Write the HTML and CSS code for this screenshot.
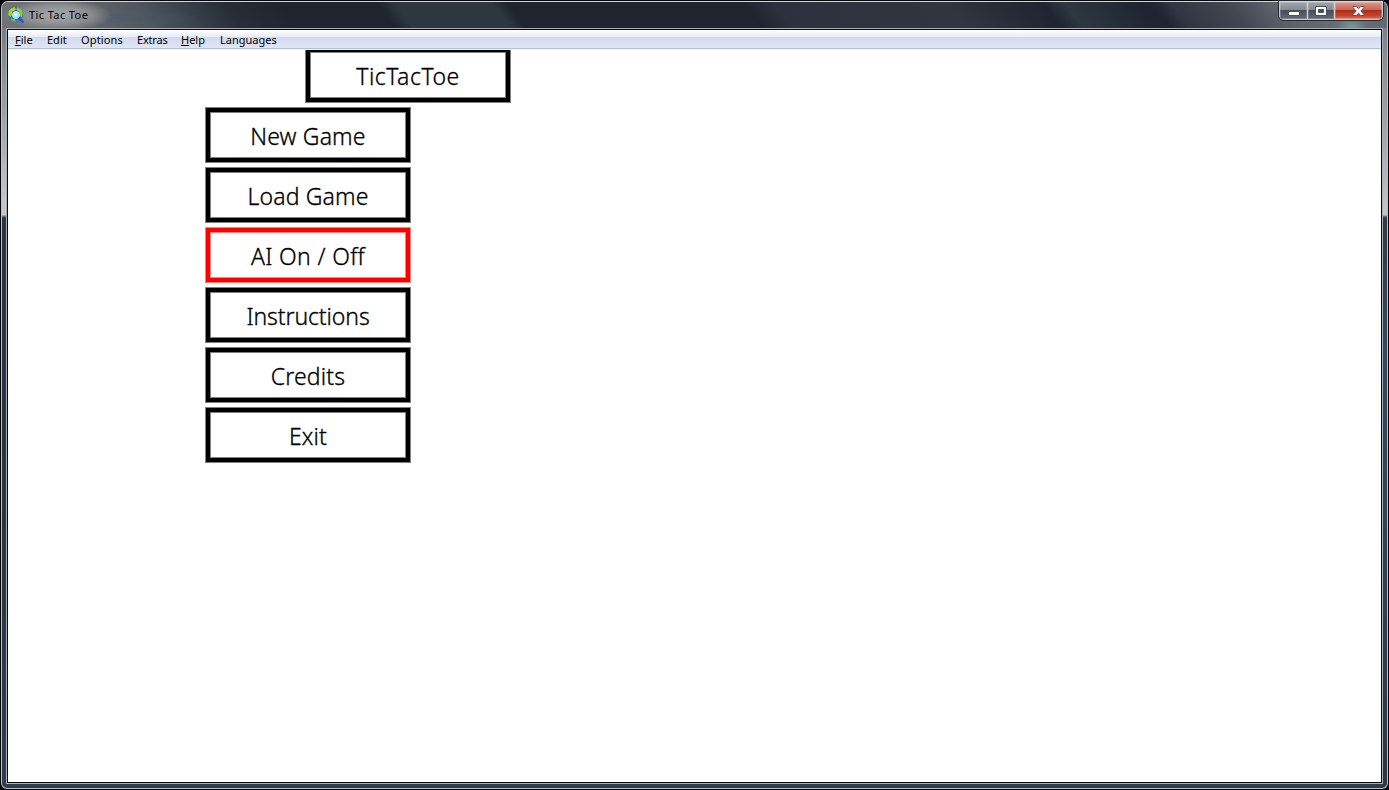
FILE: index.html
```html
<!DOCTYPE html>
<html lang="en">
<head>
<meta charset="utf-8">
<title>Tic Tac Toe</title>
<link rel="stylesheet" href="styles.css">
</head>
<body>
<div class="window">
  <div class="frame">
    <header class="titlebar">
      <svg class="app-icon" width="16" height="16" viewBox="0 0 16 16">
        <circle cx="7.5" cy="7.5" r="7.5" fill="#2f76cf"/>
        <path d="M.6 4.500Q3 .5 6.500.2L8 2 6 4 4 4.500 4 7.500 2.500 10 .3 8z" fill="#a8d520"/>
        <path d="M9 .3q4.500 1 5.800 5.200l-.6 4.500-2.200-1L11 5 8.500 3z" fill="#8cc832"/>
        <path d="M3.500 11.500l3.500.5 1 2.700Q5 15 2.600 13z" fill="#72bb40"/>
        <path d="M11 11l3.700 3.700" stroke="#1e63bb" stroke-width="2.600" stroke-linecap="round"/>
        <circle cx="8" cy="8" r="3.500" fill="#a8e5ee" stroke="#c9dde0" stroke-width="1"/>
        <circle cx="7.500" cy="7.200" r="1.600" fill="#d7f8f5"/>
      </svg>
      <h1 class="caption">Tic Tac Toe</h1>
      <div class="controls">
        <span class="control minimize"><svg width="13" height="6" viewBox="0 0 13 6"><rect x=".5" y=".5" width="11" height="4" rx=".5" fill="#fff" stroke="#4b505d"/></svg></span>
        <span class="control maximize"><svg width="12" height="10" viewBox="0 0 12 10"><path fill-rule="evenodd" d="M.5.5h11v9H.5zM3.500 3.500v3h5v-3z" fill="#fff" stroke="#4b505d"/></svg></span>
        <span class="control close"><svg width="13" height="10" viewBox="0 0 13 10"><path d="M1 .5h3.200l2.300 2.200L8.800.5H12v1L8.800 5 12 8.500v1H8.800L6.500 7.300 4.200 9.500H1v-1L4.200 5 1 1.500z" fill="#fff" stroke="#56505e"/></svg></span>
      </div>
    </header>
    <div class="client">
      <nav class="menubar">
        <span class="m-file"><u>F</u>ile</span><span class="m-edit">Edit</span><span class="m-options">Options</span><span class="m-extras">Extras</span><span class="m-help"><u>H</u>elp</span><span class="m-languages">Languages</span>
      </nav>
      <main class="board">
        <div class="box heading">TicTacToe</div>
        <div class="box">New Game</div>
        <div class="box">Load Game</div>
        <div class="box selected">AI On / Off</div>
        <div class="box instructions">Instructions</div>
        <div class="box">Credits</div>
        <div class="box">Exit</div>
      </main>
    </div>
  </div>
</div>
</body>
</html>
```
FILE: styles.css
```css
* { box-sizing: border-box; }
body { margin: 0; background: #05070a; font-family: "Noto Sans", sans-serif; color: #000; }
.window { height: 790px; padding: 1px; overflow: hidden; }
.frame {
  height: 788px;
  border: 1px solid #b9bfc5;
  border-top-color: #d5d5dd;
  border-radius: 7px 7px 6px 6px;
  padding: 0 4px 4px;
  display: flex;
  flex-direction: column;
  background:
    linear-gradient(#6d7075 0, #8c8d90 60px, #c2c0c2 190px, #c9c7c8 213px, #777b80 214px, #2d3540 216px, #2b3542 500px, #303e4c 100%) left / 5px 100% no-repeat,
    linear-gradient(#70757c 0, #8a8f96 60px, #b9bcc1 190px, #c5c8cb 213px, #777b80 214px, #303a47 216px, #34495d 350px, #2b3745 100%) right / 5px 100% no-repeat,
    #2e3b48;
}
.titlebar {
  height: 26px;
  margin: 0 -4px;
  padding-left: 6px;
  display: flex;
  align-items: flex-start;
  border-radius: 6px 6px 0 0;
  background:
    radial-gradient(ellipse 54px 16px at 56px 13px, rgba(180,181,182,.85), rgba(155,157,159,.7) 60%, transparent),
    radial-gradient(ellipse 18px 7px at 117px 16px, rgba(62,91,117,.5), transparent),
    radial-gradient(ellipse 42px 7px at 157px 16px, rgba(69,85,103,.5), transparent),
    radial-gradient(ellipse 15px 8px at 1350px 24px, rgba(116,163,155,.8), transparent),
    linear-gradient(52deg, #717477 0, #65696e 5.8%, #50565e 10.8%, #3b434d 13.7%, #272e38 17%, #1e252f 21%, #1e252f 28.1%, #2e3640 29.3%, #2e3640 36.2%, #1e252f 37.3%, #1e252f 54.2%, #2b323d 56.4%, #30363f 68.5%, #1e2530 75.4%, #2e3640 77%, #1e2530 82.2%, #1e2530 83.2%, #303641 84.5%, #414851 88.7%, #5b6169 91.5%, #6a7078 96%, #60666e 100%);
}
.app-icon { margin-top: 5px; flex: none; }
.caption { margin: 5px 0 0 5px; font-size: 11px; line-height: 16px; font-weight: 400; letter-spacing: .4px; }
.controls {
  margin: -1px 4px 0 auto;
  height: 19px;
  width: 104px;
  display: flex;
  border: 1px solid #c5c8cc;
  border-top: 0;
  border-radius: 0 0 5px 5px;
  box-shadow: 0 0 0 1px #252a31;
  overflow: hidden;
}
.control { display: flex; align-items: center; justify-content: center; border-top: 1px solid #d8d9df; }
.control svg { display: block; }
.minimize, .maximize { background: linear-gradient(#a2a6ad, #858a91 46%, #484f5a 50%, #626973 100%); border-right: 1px solid #cdd0d4; box-shadow: inset 0 0 0 1px rgba(255,255,255,.18); }
.minimize { width: 28px; padding: 6px 0 0 1px; }
.maximize { width: 27px; }
.close { width: 47px; background: linear-gradient(#d99a90, #c96553 46%, #ad2d18 50%, #c2452c 80%, #d57355); box-shadow: inset 0 0 0 1px rgba(255,220,200,.3); }
.client {
  flex: 1;
  display: flex;
  flex-direction: column;
  background: #fff;
  outline: 1px solid #a7afb7;
  border: 1px solid #090b10;
  margin: 1px 1px 1px;
}
.menubar {
  height: 20px;
  display: flex;
  padding-left: 7px;
  font-size: 11px;
  line-height: 20px;
  border-bottom: 1px solid #f2f4fa;
  background: linear-gradient(#fff, #e7ebf5 7px, #d4daec 7px, #e1e6f6 18px, #b5bed2 18px);
}
.menubar span { white-space: nowrap; }
.menubar u { text-underline-offset: 1px; }
.m-file { width: 32px; }
.m-edit { width: 34px; }
.m-options { width: 56px; letter-spacing: .15px; }
.m-extras { width: 44px; letter-spacing: -.2px; }
.m-help { width: 39px; }
.board { flex: 1; overflow: hidden; padding-left: 197px; display: flex; flex-direction: column; gap: 4px; }
.box {
  flex: none;
  width: 206px;
  height: 56px;
  border: 1px solid #808080;
  box-shadow: inset 0 0 0 4px #000, inset 0 0 0 5px #808080;
  text-align: center;
  font-size: 23px;
  font-weight: 300;
  -webkit-text-stroke: .3px #000;
  letter-spacing: .15px;
  line-height: 57px;
}
.heading { margin: -3px 0 0 100px; letter-spacing: .5px; }
.selected { border-color: #ff8080; box-shadow: inset 0 0 0 4px #f00, inset 0 0 0 5px #ff8080; letter-spacing: .35px; }
.instructions { letter-spacing: -.1px; }
```
